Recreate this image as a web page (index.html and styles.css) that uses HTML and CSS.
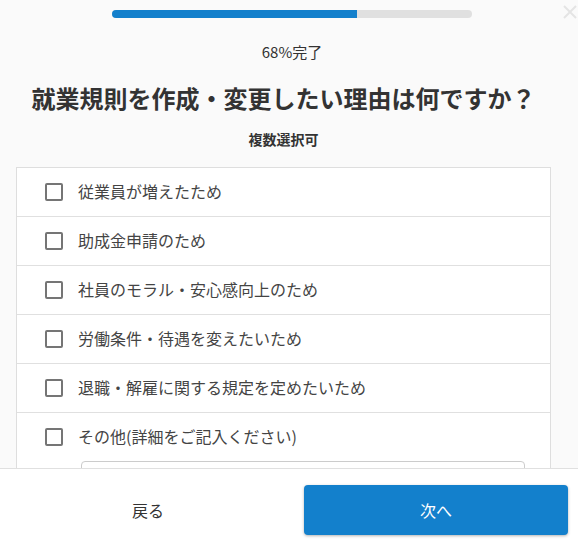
FILE: index.html
```html
<!DOCTYPE html>
<html lang="ja">
<head>
    <meta charset="utf-8">
    <title>就業規則 診断</title>
    <link rel="stylesheet" href="styles.css">
</head>
<body>
    <div class="modal">
        <div class="header">
            <div class="progress"><div class="progress-fill" style="width: 68%"></div></div>
            <div class="percent">68%完了</div>
            <button class="close" aria-label="閉じる">
                <svg width="14" height="14" viewBox="0 0 14 14"><path d="M1 1L13 13M13 1L1 13" stroke="#e4e4e4" stroke-width="2" fill="none"/></svg>
            </button>
        </div>

        <div class="scroll">
            <h1>就業規則を作成・変更したい理由は何ですか？</h1>
            <div class="hint">複数選択可</div>
            <ul class="options">
                <li><label class="option"><input type="checkbox"><span>従業員が増えたため</span></label></li>
                <li><label class="option"><input type="checkbox"><span>助成金申請のため</span></label></li>
                <li><label class="option"><input type="checkbox"><span>社員のモラル・安心感向上のため</span></label></li>
                <li><label class="option"><input type="checkbox"><span>労働条件・待遇を変えたいため</span></label></li>
                <li><label class="option"><input type="checkbox"><span>退職・解雇に関する規定を定めたいため</span></label></li>
                <li class="other">
                    <label class="option"><input type="checkbox"><span>その他(詳細をご記入ください)</span></label>
                    <textarea class="detail"></textarea>
                </li>
            </ul>
        </div>

        <div class="footer">
            <button class="btn back">戻る</button>
            <button class="btn next">次へ</button>
        </div>
    </div>
</body>
</html>
```

FILE: styles.css
```css
* {
    margin: 0;
    padding: 0;
    box-sizing: border-box;
}

html, body {
    overflow: hidden;
}

body {
    font-family: "Noto Sans CJK JP", "Noto Sans", sans-serif;
    background: #fafafa;
    color: #333;
}

.modal {
    width: 578px;
    height: 541px;
    display: flex;
    flex-direction: column;
    overflow: hidden;
    position: relative;
}

/* Header */
.header {
    height: 64px;
    flex: none;
    padding: 10px 0 0 6px;
    display: flex;
    flex-direction: column;
    align-items: center;
}

.progress {
    width: 360px;
    height: 8px;
    background: #e0e0e0;
    border-radius: 4px;
    overflow: hidden;
}

.progress-fill {
    height: 100%;
    background: #1380cc;
}

.percent {
    margin-top: 24px;
    font-size: 15px;
    line-height: 20px;
    color: #333;
}

.close {
    position: absolute;
    top: 5px;
    right: 1px;
    width: 14px;
    height: 14px;
    border: none;
    background: none;
    display: block;
}

.close svg {
    display: block;
}

/* Scroll area */
.scroll {
    width: 590px;
    height: 404px;
    flex: none;
    overflow-y: scroll;
    padding: 17px 39px 16px 16px;
}

.scroll::-webkit-scrollbar {
    width: 15px;
}

.scroll::-webkit-scrollbar-track {
    background: #f1f1f1;
}

.scroll::-webkit-scrollbar-thumb {
    background: #a8a8a8;
    border: 2px solid #f1f1f1;
}

.scroll::-webkit-scrollbar-button:single-button {
    display: block;
    height: 17px;
    background: #f1f1f1;
}

h1 {
    font-size: 24px;
    line-height: 34px;
    font-weight: 700;
    text-align: center;
    color: #333;
}

.hint {
    margin-top: 14px;
    font-size: 14px;
    line-height: 20px;
    font-weight: 700;
    text-align: center;
    color: #333;
}

.options {
    list-style: none;
    margin-top: 18px;
    background: #fff;
    border: 1px solid #dedede;
}

.options li {
    border-bottom: 1px solid #e0e0e0;
}

.options li:last-child {
    border-bottom: none;
    padding-bottom: 12px;
}

.option {
    height: 48px;
    display: flex;
    align-items: center;
    padding-left: 28px;
    font-size: 16px;
    color: #444;
}

.option input {
    appearance: none;
    -webkit-appearance: none;
    width: 18px;
    height: 18px;
    border: 2px solid #757575;
    border-radius: 2px;
    background: #fff;
    flex: none;
}

.option span {
    margin-left: 15px;
    margin-bottom: 3px;
}

.detail {
    display: block;
    margin: 0 25px 0 64px;
    width: calc(100% - 89px);
    height: 40px;
    border: 1px solid #ccc;
    border-radius: 4px;
    background: #fff;
    resize: none;
}

/* Footer */
.footer {
    height: 73px;
    flex: none;
    background: #fff;
    border-top: 1px solid #e0e0e0;
    padding: 16px 10px 6px 16px;
    display: grid;
    grid-template-columns: 1fr 1fr;
    gap: 24px;
}

.btn {
    font-family: inherit;
    font-size: 16px;
    border: none;
    border-radius: 4px;
    height: 50px;
}

.back {
    background: transparent;
    color: #333;
}

.next {
    background: #1380cc;
    color: #fff;
    box-shadow: 0 1px 3px rgba(0,0,0,0.3);
}
```
